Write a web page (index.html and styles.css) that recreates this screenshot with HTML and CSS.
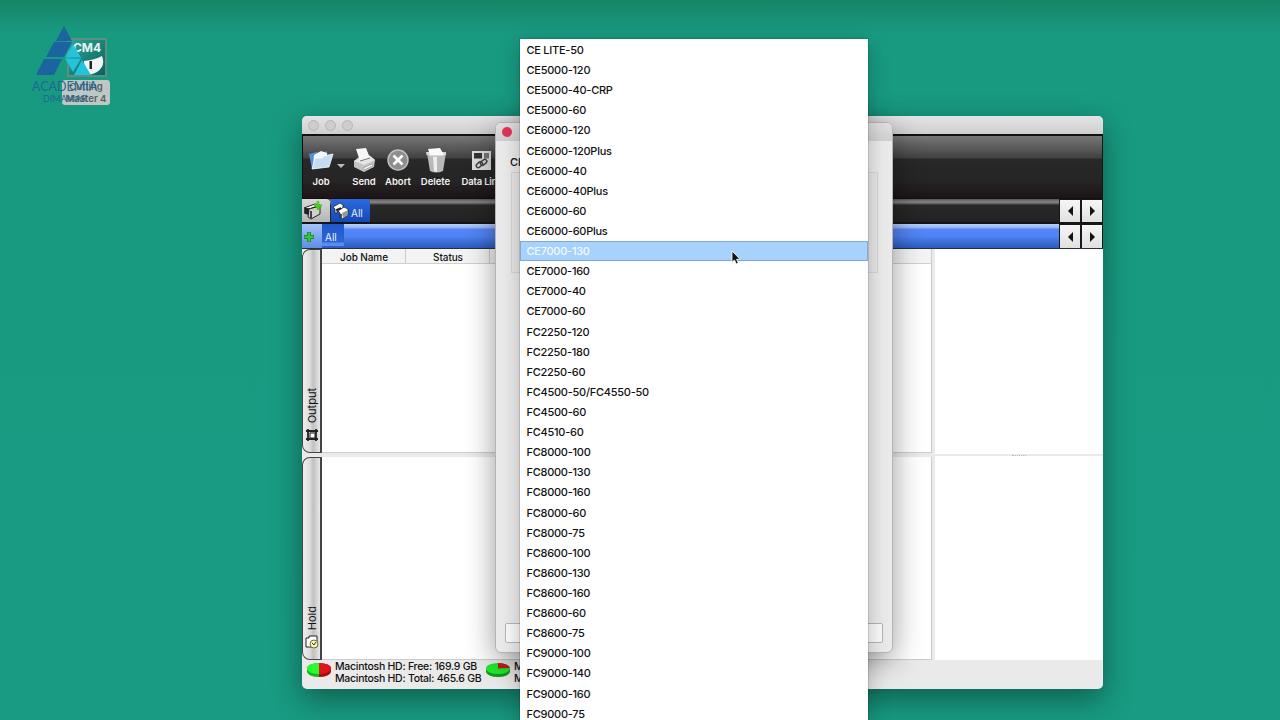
FILE: index.html
```html
<!DOCTYPE html>
<html lang="en">
<head>
    <meta charset="UTF-8">
    <meta name="viewport" content="width=device-width, initial-scale=1.0">
    <title>Cutting Master 4</title>
    <link rel="stylesheet" href="styles.css">
</head>
<body>
    <!-- desktop shortcut -->
    <div class="shortcut">
        <div class="shortcut-icon">
            <span>CM4</span>
            <svg width="35" height="22" viewBox="0 0 35 22">
                <path d="M15 5 Q26 4 33 0 Q37 10 28 16 Q23 19 16 19 Z" fill="#f2f5f4"/>
                <rect x="20.500" y="5" width="2.500" height="8" fill="#222"/>
            </svg>
        </div>
        <div class="shortcut-label">Cutting<br>Master 4</div>
    </div>

    <div class="brand">
        <svg width="66" height="52" viewBox="0 0 66 52">
            <path d="M32 0 L40 15 H24 Z M22 16 H40 L32 31 H14 Z M12 33 H30 L22 49 H4 Z" fill="#1c649f"/>
            <path d="M41 18 L49 31.500 H33 Z M33 32.500 H49 L41 46 Z M50 34 L59 49 H42 Z" fill="#23c3dc"/>
        </svg>
        <div class="brand-name">ACADEMIA</div>
        <div class="brand-sub">DIMAMAR</div>
    </div>

    <div class="window">
        <div class="titlebar"><i></i><i></i><i></i></div>

        <div class="toolbar">
            <div class="tool job">
                <svg width="28" height="28" viewBox="0 0 28 28">
                    <path d="M2 8 L10 6 L12 8 L20 5 L21 20 L5 23 Z" fill="#4f93d2"/>
                    <path d="M7 9 L14 5 L20 7 L20 19 L6 21 Z" fill="#f4f8fc"/>
                    <path d="M5 23 L8 12 L15 12 L17 10 L26 8 L22 21 Z" fill="#c5ddf3" stroke="#fff" stroke-width=".8"/>
                </svg>
                <span>Job</span>
            </div>
            <div class="arrow"></div>
            <div class="tool send">
                <svg width="28" height="28" viewBox="0 0 28 28">
                    <path d="M4 15 L9 11 L19 9 L25 14 L24 21 L14 26 L4 21 Z" fill="#c4c4c4"/>
                    <path d="M4 15 L14 19 L25 14 L20 10 L9 12 Z" fill="#e6e6e6"/>
                    <path d="M6 3 L16 2 L20 12 L10 15 Z" fill="#f7f7f7"/>
                    <path d="M10 15 L20 12" stroke="#777"/>
                    <path d="M13 22 L22 18 L23 20 L14 24 Z" fill="#f4f4f4" stroke="#888" stroke-width=".6"/>
                </svg>
                <span>Send</span>
            </div>
            <div class="tool abort">
                <svg width="28" height="28" viewBox="0 0 28 28">
                    <circle cx="14" cy="14" r="10" fill="#8e8e8e" stroke="#c0c0c0" stroke-width="1.500"/>
                    <path d="M9.500 9.500 L18.500 18.500 M18.500 9.500 L9.500 18.500" stroke="#fff" stroke-width="2.600"/>
                </svg>
                <span>Abort</span>
            </div>
            <div class="tool delete">
                <svg width="28" height="28" viewBox="0 0 28 28">
                    <path d="M5 7 H24 L21 25 Q14.500 28 8 25 Z" fill="#b9b9b9"/>
                    <path d="M11 11 L12 25 L15 26 L15 11 Z" fill="#ededed"/>
                    <path d="M4 6 H24 V9 Q14 12 4.500 9 Z" fill="#d6d6d6"/>
                    <path d="M6 3 L18 2 L22 9 L8 9 Z" fill="#fafafa"/>
                </svg>
                <span>Delete</span>
            </div>
            <div class="tool link">
                <svg width="28" height="28" viewBox="0 0 28 28">
                    <rect x="4" y="5" width="19" height="19" fill="#dedede"/>
                    <rect x="6" y="7" width="8" height="5.500" fill="#333"/>
                    <rect x="16" y="7" width="5" height="5.500" fill="#777"/>
                    <g fill="none" stroke="#444" stroke-width="1.500">
                        <rect x="8" y="17" width="7" height="4" rx="2" transform="rotate(-40 11 19)"/>
                        <rect x="12" y="14" width="7" height="4" rx="2" transform="rotate(-40 16 16)"/>
                    </g>
                </svg>
                <span>Data Link</span>
            </div>
        </div>

        <div class="strip dark">
            <div class="plotter-tab">
                <svg width="22" height="22" viewBox="0 0 22 22">
                    <path d="M1 8 L12 4 L17 5 L6 9 Z" fill="#fff" stroke="#222"/>
                    <path d="M6 9 L17 6 V14 L8 19 L5 17 Z" fill="#cfcfcf" stroke="#222"/>
                    <path d="M2 9 V13 L5 14 V9 Z M8 11 V18" fill="#222" stroke="#222" stroke-width="1.600"/>
                    <path d="M15 1 V10 M11 5.500 H19" stroke="#43d41c" stroke-width="2.500"/>
                </svg>
            </div>
            <div class="all-tab">
                <svg width="20" height="20" viewBox="0 0 20 20">
                    <path d="M2 6 L9 2 L12 4 V7 L6 9 V12 L4 12 V8 Z" fill="#fff" stroke="#222" stroke-width=".8"/>
                    <path d="M7 10 L13 6 L17 8 V14 L11 18 L9 16 V12 Z" fill="#fff" stroke="#222" stroke-width=".8"/>
                    <path d="M11 12 L17 9 V14 L12 17 Z" fill="#999"/>
                    <path d="M5 9 L10 7 M10 13 V17" stroke="#222" stroke-width="1.500"/>
                </svg>
                <span>All</span>
            </div>
            <div class="pager"><b class="prev"></b><b class="next"></b></div>
        </div>

        <div class="strip blue">
            <div class="add">
                <svg width="12" height="12" viewBox="0 0 12 12">
                    <path d="M6 1 V11 M1 6 H11" stroke="#1d7d2c" stroke-width="4"/>
                    <path d="M6 1.500 V10.500 M1.500 6 H10.500" stroke="#34c63c" stroke-width="2.500"/>
                </svg>
            </div>
            <div class="sub-tab">All</div>
            <div class="pager"><b class="prev"></b><b class="next"></b></div>
        </div>

        <div class="content">
            <div class="jobs">
                <div class="pane output">
                    <div class="side">
                        <svg width="14" height="14" viewBox="0 0 14 14">
                            <path d="M3 1 V13 M11 1 V13 M1 3 H13 M1 11 H13" stroke="#222" stroke-width="1.800"/>
                            <rect x="5" y="5" width="5" height="5" fill="#fff" stroke="#222"/>
                        </svg>
                        <span>Output</span>
                    </div>
                    <div class="list">
                        <div class="list-head"><span>Job Name</span><span>Status</span><span></span></div>
                    </div>
                </div>
                <div class="pane hold">
                    <div class="side">
                        <svg width="14" height="14" viewBox="0 0 14 14">
                            <path d="M1 3 H4 V1 H12 V12 H1 Z" fill="#fff" stroke="#222"/>
                            <circle cx="9" cy="9" r="4" fill="#f5f4c0" stroke="#74732b"/>
                            <path d="M7 8 L9 10 L11 7" fill="none" stroke="#333"/>
                        </svg>
                        <span>Hold</span>
                    </div>
                    <div class="list"></div>
                </div>
            </div>
            <div class="preview">
                <div class="preview-top"></div>
                <div class="grip"></div>
                <div class="preview-bottom"></div>
            </div>
        </div>

        <div class="footer">
            <svg class="pie" width="24" height="16" viewBox="0 0 24 16">
                <path d="M12 1 A12 5.500 0 0 0 0 6.500 V9.500 A12 5.500 0 0 0 12 15 Z" fill="#12b91b"/>
                <path d="M12 1 A12 5.500 0 0 0 12 12 Z" fill="#2bfa30"/>
                <path d="M12 1 A12 5.500 0 0 1 24 6.500 V9.500 A12 5.500 0 0 1 12 15 Z" fill="#a80f12"/>
                <path d="M12 1 A12 5.500 0 0 1 12 12 Z" fill="#e0151b"/>
            </svg>
            <div class="disk">Macintosh HD: Free: 169.9 GB<br>Macintosh HD: Total: 465.6 GB</div>
            <svg class="pie" width="24" height="16" viewBox="0 0 24 16">
                <path d="M0 6.500 V9.500 A12 5.500 0 0 0 24 9.500 V6.500 Z" fill="#129b1b"/>
                <ellipse cx="12" cy="6.500" rx="12" ry="5.500" fill="#22ea2c"/>
                <path d="M12 6.500 V1 A12 5.500 0 0 1 24 6 Z" fill="#c91b1b"/>
            </svg>
            <div class="disk">M<br>M</div>
        </div>
    </div>

    <div class="dialog">
        <div class="dialog-title"><i></i></div>
        <div class="dialog-body">
            <p>Ch</p>
            <div class="group"></div>
            <div class="button"></div>
        </div>
    </div>

    <ul class="menu">
        <li>CE LITE-50</li>
        <li>CE5000-120</li>
        <li>CE5000-40-CRP</li>
        <li>CE5000-60</li>
        <li>CE6000-120</li>
        <li>CE6000-120Plus</li>
        <li>CE6000-40</li>
        <li>CE6000-40Plus</li>
        <li>CE6000-60</li>
        <li>CE6000-60Plus</li>
        <li class="selected">CE7000-130</li>
        <li>CE7000-160</li>
        <li>CE7000-40</li>
        <li>CE7000-60</li>
        <li>FC2250-120</li>
        <li>FC2250-180</li>
        <li>FC2250-60</li>
        <li>FC4500-50/FC4550-50</li>
        <li>FC4500-60</li>
        <li>FC4510-60</li>
        <li>FC8000-100</li>
        <li>FC8000-130</li>
        <li>FC8000-160</li>
        <li>FC8000-60</li>
        <li>FC8000-75</li>
        <li>FC8600-100</li>
        <li>FC8600-130</li>
        <li>FC8600-160</li>
        <li>FC8600-60</li>
        <li>FC8600-75</li>
        <li>FC9000-100</li>
        <li>FC9000-140</li>
        <li>FC9000-160</li>
        <li>FC9000-75</li>
    </ul>

    <svg class="cursor" width="10" height="16" viewBox="0 0 10 16">
        <path d="M1 1 V12 L3.500 10 L5.300 14 L7.300 13 L5.500 9.300 H9 Z" fill="#111" stroke="#fff" stroke-width=".8"/>
    </svg>
</body>
</html>
```
FILE: styles.css
```css
* {
    box-sizing: border-box;
}

body {
    margin: 0;
    height: 720px;
    position: relative;
    overflow: hidden;
    font-family: Inter, "Liberation Sans", sans-serif;
    font-size: 11px;
    color: #111;
    background: linear-gradient(#188467, #189a81 32px, #189b82);
}

/* desktop */
.shortcut {
    position: absolute;
    left: 62px;
    top: 38px;
    width: 48px;
}

.shortcut-icon {
    width: 40px;
    height: 39px;
    margin-left: 5px;
    border: 2px solid #5e8f84;
    background: linear-gradient(135deg, #2aa596, #0b625d);
    color: #e8f3f1;
    font-size: 12px;
    font-weight: 700;
    line-height: 16px;
    text-align: center;
}

.shortcut-icon svg {
    display: block;
}

.shortcut-label {
    height: 25px;
    margin-top: 3px;
    padding-top: 1px;
    border-radius: 3px;
    background: #bfc7c5;
    color: #555e60;
    font-size: 9.5px;
    font-weight: 600;
    line-height: 11.5px;
    text-align: center;
}

.brand {
    position: absolute;
    left: 32px;
    top: 26px;
    width: 70px;
    color: #1f6796;
}

.brand svg {
    display: block;
}

.brand-name {
    font-family: Lato, sans-serif;
    font-size: 12.5px;
    line-height: 17px;
}

.brand-sub {
    padding-left: 11px;
    font-family: Lato, sans-serif;
    font-size: 9px;
    line-height: 8px;
}

/* main window */
.window {
    position: absolute;
    left: 302px;
    top: 116px;
    width: 801px;
    height: 573px;
    display: flex;
    flex-direction: column;
    overflow: hidden;
    border-radius: 5px;
    background: #eaeaea;
    box-shadow: 0 10px 30px rgba(0, 0, 0, 0.4);
}

.titlebar {
    height: 18px;
    display: flex;
    align-items: center;
    gap: 6px;
    padding-left: 6px;
    background: linear-gradient(#e4e4e4, #cfcfcf);
}

.titlebar i {
    width: 11px;
    height: 11px;
    border: 1px solid #b5b5b5;
    border-radius: 50%;
    background: #cdcdcd;
}

.toolbar {
    height: 65px;
    display: flex;
    padding: 10px 0 0 2px;
    border: 1px solid #111;
    border-top-width: 2px;
    background: linear-gradient(#777, #414141 22px, #292929 23px, #262425 45px, #1c1416);
}

.tool {
    flex: none;
    display: flex;
    flex-direction: column;
    align-items: center;
    color: #f2f2f2;
    font-size: 9.5px;
    font-weight: 600;
    line-height: 12px;
    white-space: nowrap;
}

.tool svg {
    margin-bottom: 1.5px;
}

.job { width: 32px; }
.send { width: 38px; }
.abort { width: 30px; }
.delete { width: 45px; }
.link { width: 48px; letter-spacing: -0.2px; }

.arrow {
    align-self: flex-start;
    margin-top: 18px;
    border: 4px solid transparent;
    border-top-color: #bbb;
    border-bottom: 0;
}

.strip {
    height: 25px;
    display: flex;
    border-bottom: 2px solid #151515;
}

.dark {
    background: linear-gradient(#555, #888 3px, #555 5px, #292929 6px, #222);
}

.blue {
    border-bottom: 1px solid #26303f;
    background: linear-gradient(#b9d0fb, #8fb2f9 4px, #5587f5 5px, #4f83f4 12px, #2b5bbd);
}

.plotter-tab {
    width: 28px;
    padding: 1px 0 0 1px;
    border-radius: 0 4px 0 0;
    background: linear-gradient(#d8d8d8, #b5b5b5);
}

.all-tab {
    width: 39px;
    display: flex;
    align-items: center;
    border-radius: 3px 3px 0 0;
    margin-left: 1px;
    background: linear-gradient(#2c6ae0, #1549b5);
    color: #e8f0ff;
    font-size: 10px;
}

.all-tab span {
    padding-top: 5px;
}

.add {
    width: 20px;
    padding: 7px 0 0 1px;
    background: linear-gradient(#a5c3f9, #5d8de8);
}

.sub-tab {
    width: 22px;
    height: 22px;
    padding-left: 3px;
    background: linear-gradient(#2059c9, #2b66d6 18px, #5a8cf0 19px);
    color: #e8f0ff;
    font-size: 10px;
    line-height: 26px;
}

.pager {
    display: flex;
    gap: 2px;
    margin-left: auto;
    padding: 1px 1px 0;
    background: #181818;
}

.pager b {
    width: 20px;
    display: flex;
    align-items: center;
    justify-content: center;
    background: linear-gradient(#f6f6f6, #e0e0e0);
}

.pager b::before {
    content: "";
    border: 5px solid transparent;
}

.pager .prev::before {
    border-left-width: 0;
    border-right-color: #111;
}

.pager .next::before {
    border-right-width: 0;
    border-left-color: #111;
}

.content {
    height: 411px;
    display: flex;
}

.jobs {
    width: 630px;
    display: flex;
    flex-direction: column;
    gap: 4px;
}

.pane {
    display: flex;
}

.output { height: 204px; }
.hold { height: 203px; }

.side {
    width: 20px;
    display: flex;
    flex-direction: column-reverse;
    align-items: center;
    gap: 5px;
    padding-bottom: 10px;
    border: 1px solid #444;
    border-right-width: 2px;
    border-radius: 8px 0 0 8px;
    background: linear-gradient(90deg, #eee, #ddd 40%, #c0c0c0 60%, #e8e8e8);
}

.side span {
    writing-mode: vertical-rl;
    transform: rotate(180deg);
    line-height: 14px;
}

.list {
    flex: 1;
    border-right: 1px solid #ccc;
    border-bottom: 1px solid #ccc;
    background: #fff;
}

.list-head {
    height: 15px;
    display: flex;
    border-bottom: 1px solid #d0d0d0;
    background: #f3f3f3;
    font-size: 10px;
    font-weight: 500;
    letter-spacing: -0.1px;
    line-height: 16px;
    text-align: center;
}

.list-head span {
    width: 84px;
    padding-left: 1px;
    border-right: 1px solid #ccc;
}

.list-head span:last-child {
    flex: 1;
    border: 0;
}

.preview {
    flex: 1;
    margin-left: 3px;
    display: flex;
    flex-direction: column;
}

.preview-top {
    height: 205px;
    background: #fff;
}

.grip {
    height: 2px;
    width: 14px;
    align-self: center;
    border-bottom: 1px dotted #bbb;
}

.preview-bottom {
    flex: 1;
    background: #fff;
}

.footer {
    flex: 1;
    display: flex;
    padding: 1px 0 0 5px;
}

.pie {
    margin-top: 1px;
}

.disk {
    width: 151px;
    margin-right: 4px;
    padding: 0.4px 0 0 4px;
    font-size: 10.5px;
    font-weight: 500;
    letter-spacing: -0.26px;
    line-height: 11.5px;
    white-space: nowrap;
}

/* dialog behind the menu */
.dialog {
    position: absolute;
    left: 495px;
    top: 122px;
    width: 398px;
    height: 531px;
    overflow: hidden;
    border: 1px solid #b4b4b4;
    border-radius: 6px;
    background: #ebebeb;
    box-shadow: 0 8px 30px rgba(0, 0, 0, 0.4);
}

.dialog-title {
    height: 18px;
    padding: 4px 6px;
    background: linear-gradient(#e0e0e0, #d0d0d0);
}

.dialog-title i {
    display: block;
    width: 10px;
    height: 10px;
    border-radius: 50%;
    background: #e33356;
}

.dialog-body {
    height: 511px;
    display: flex;
    flex-direction: column;
    padding: 14px 9px 9px;
}

.dialog-body p {
    margin: 0 5px 2px;
    font-weight: 500;
    line-height: 15px;
}

.group {
    height: 101px;
    margin: 0 5px 0 6px;
    border: 1px solid #d6d6d6;
    background: #e7e7e7;
}

.button {
    height: 20px;
    margin-top: auto;
    border: 1px solid #b5b5b5;
    border-radius: 2px;
    background: #fafafa;
}

/* model list */
.menu {
    position: absolute;
    left: 520px;
    top: 39px;
    width: 348px;
    margin: 0;
    padding: 1px 0 0;
    list-style: none;
    background: #fff;
    box-shadow: 0 0 0 1px rgba(0, 0, 0, 0.12), 0 6px 20px rgba(0, 0, 0, 0.25);
}

.menu li {
    height: 20.12px;
    padding-left: 5.5px;
    border: 1px solid transparent;
    font-size: 11px;
    font-weight: 500;
    letter-spacing: -0.26px;
    line-height: 18px;
}

.menu .selected {
    border-color: #7fa9d4;
    background: #a7d2fd;
    color: #f3faff;
}

.cursor {
    position: absolute;
    left: 731px;
    top: 250px;
}
```
